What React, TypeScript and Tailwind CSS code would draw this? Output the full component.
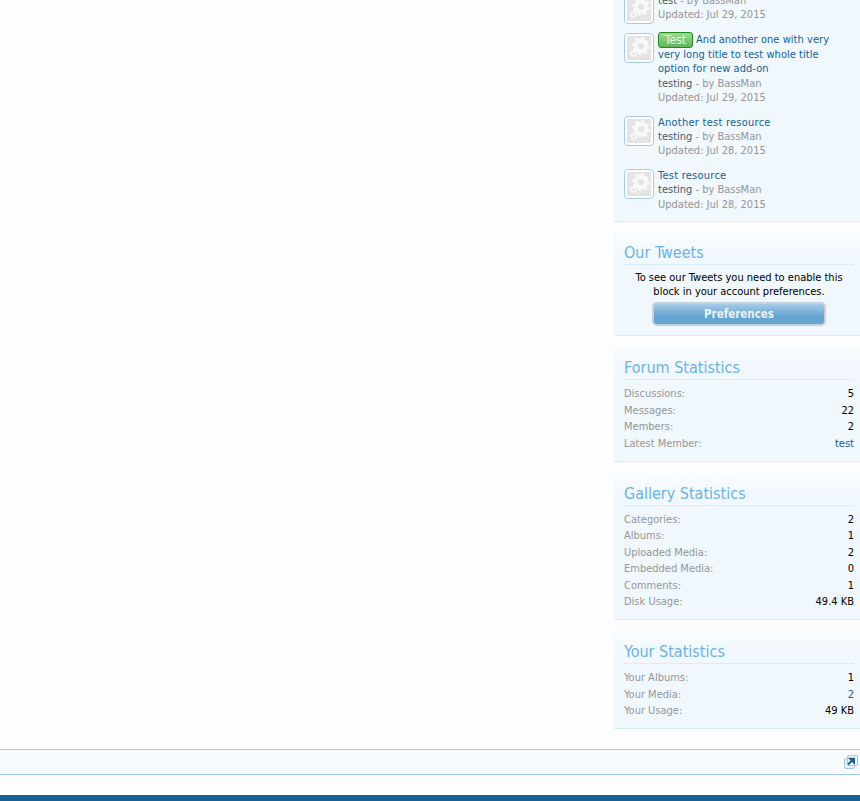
const font = "font-['DejaVu_Sans'] [font-stretch:condensed]";

function Thumb() {
  return (
    <div className="w-[30px] h-[30px] shrink-0 rounded-[4px] border border-[#a5cae4] bg-white p-[2px]">
      <div className="w-full h-full bg-[#e4e4e4]">
        <svg viewBox="0 0 24 24" className="w-full h-full" fill="none" stroke="#f8f8f8">
          <circle cx="14" cy="10" r="5.2" strokeWidth="4.4" />
          <circle cx="14" cy="10" r="8" strokeWidth="2" strokeDasharray="3.1 3.18" />
          <circle cx="6.5" cy="17.5" r="2.4" strokeWidth="1.8" />
        </svg>
      </div>
    </div>
  );
}

function Resource({ title, date, prefix }: { title: string; date: string; prefix?: boolean }) {
  return (
    <li className="flex gap-[4px] pl-[10px] pr-[6px] mb-[10px] last:mb-[9px] text-[11px] leading-[14.4px]">
      <Thumb />
      <div className="min-w-0">
        <div className={prefix ? "text-[#176093] tracking-[0.05px] pr-[8px]" : "text-[#176093] tracking-[0.25px]"}>
          {prefix && (
            <span className="inline-block w-[35px] h-[16px] -mt-[1px] mr-[3px] rounded-[3px] border border-[#1f8a1f] bg-gradient-to-b from-[#9ddc8e] to-[#5fb55a] text-center text-[12px] text-[#e8f7e4] leading-[14px] align-top">
              Test
            </span>
          )}
          {title}
        </div>
        <div className="text-[#969696]">
          <span className="text-[#4b5a68]">testing</span> - by BassMan
        </div>
        <div className="text-[#969696]">Updated: {date}</div>
      </div>
    </li>
  );
}

function Block({ title, children }: { title: string; children: React.ReactNode }) {
  return (
    <section className="mb-[11px] border-b border-[#d7edfc] bg-gradient-to-b from-[#f9fcff] to-[#f0f7fd] to-[24px] pl-[10px] pr-[6px] pt-[10px] pb-[8.5px]">
      <h3 className="border-b border-[#d7edfc] text-[16px] leading-[21px] h-[23px] text-[#6cb2e4]">{title}</h3>
      {children}
    </section>
  );
}

function Stat({ label, value, link }: { label: string; value: string; link?: boolean }) {
  return (
    <div className="flex justify-between h-[16.5px] text-[11px] leading-[16.5px]">
      <span className="text-[#969696]">{label}:</span>
      <span className={link ? "text-[#176093]" : "text-black"}>{value}</span>
    </div>
  );
}

export default function App() {
  return (
    <div className={`${font} h-[801px] overflow-hidden flex flex-col bg-[#fdfdff]`}>
      <div className="h-[749px] overflow-hidden flex justify-end">
        <aside className="w-[246px]">
          <div className="-mt-[6px]">
            <div className="mb-[10px] border-b border-[#d7edfc] bg-[#f0f7fd]">
              <ul>
                <li className="flex gap-[4px] pl-[10px] pr-[6px] mb-[10px] text-[11px] leading-[14.4px] h-[29px]">
                  <Thumb />
                  <div>
                    <div className="h-[14.4px]">
                      <span className="text-[#4b5a68]">test</span>
                      <span className="text-[#969696]"> - by BassMan</span>
                    </div>
                    <div className="text-[#969696]">Updated: Jul 29, 2015</div>
                  </div>
                </li>
                <Resource prefix title="And another one with very very long title to test whole title option for new add-on" date="Jul 29, 2015" />
                <Resource title="Another test resource" date="Jul 28, 2015" />
                <Resource title="Test resource" date="Jul 28, 2015" />
              </ul>
            </div>
            <Block title="Our Tweets">
              <p className="mt-[6px] text-center text-[11px] leading-[14px] text-black">
                To see our Tweets you need to enable this block in your account preferences.
              </p>
              <div className="mt-[3px] mb-[0.5px] flex justify-center">
                <div className="w-[174px] h-[24px] rounded-[5px] border-2 border-[#c5d2dc] bg-gradient-to-b from-[#a7cbe4] to-[#65a5d1] to-60% text-center text-[11.5px] font-bold leading-[20px] text-[#e8f2fa]">
                  Preferences
                </div>
              </div>
            </Block>
            <Block title="Forum Statistics">
              <div className="mt-[6px]">
                <Stat label="Discussions" value="5" />
                <Stat label="Messages" value="22" />
                <Stat label="Members" value="2" />
                <Stat label="Latest Member" value="test" link />
              </div>
            </Block>
            <Block title="Gallery Statistics">
              <div className="mt-[6px]">
                <Stat label="Categories" value="2" />
                <Stat label="Albums" value="1" />
                <Stat label="Uploaded Media" value="2" />
                <Stat label="Embedded Media" value="0" />
                <Stat label="Comments" value="1" />
                <Stat label="Disk Usage" value="49.4 KB" />
              </div>
            </Block>
            <Block title="Your Statistics">
              <div className="mt-[6px]">
                <Stat label="Your Albums" value="1" />
                <Stat label="Your Media" value="2" link />
                <Stat label="Your Usage" value="49 KB" />
              </div>
            </Block>
          </div>
        </aside>
      </div>
      <div className="h-[26px] shrink-0 flex items-center justify-end border-y border-[#a5cae4] bg-[#f6fafd] pr-[2px]">
        <svg viewBox="0 0 14 14" className="w-[14px] h-[14px]">
          <rect x="0.5" y="3.5" width="10" height="10" rx="1.5" fill="#e4f0f9" stroke="#a5cae4" />
          <rect x="3.5" y="0.5" width="10" height="10" rx="1.5" fill="#f6fafd" stroke="#a5cae4" />
          <path d="M4 9.5 L8.5 5 M6.2 3.8 H10 V7.6 Z" stroke="#176093" strokeWidth="2" fill="#176093" />
        </svg>
      </div>
      <div className="h-[20px] shrink-0" />
      <div className="flex-1 bg-[#176093]" />
    </div>
  );
}
